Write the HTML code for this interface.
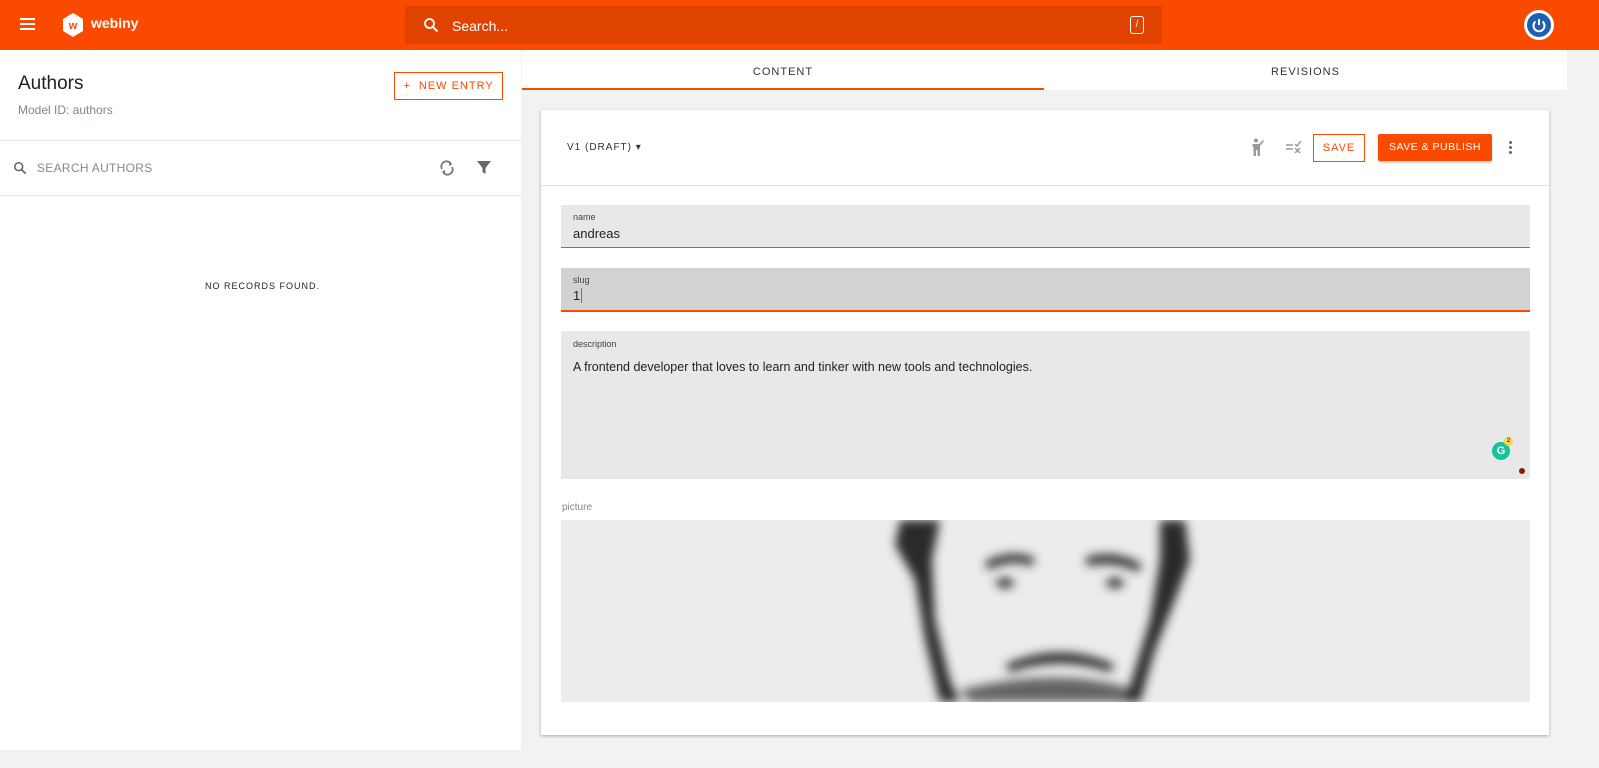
<!DOCTYPE html>
<html><head><style>
*{box-sizing:border-box;margin:0;padding:0}
body{width:1599px;height:768px;overflow:hidden;font-family:"Liberation Sans",sans-serif;background:#f2f2f2;position:relative}
.top{position:absolute;left:0;top:0;width:1599px;height:50px;background:#fa4a00}
.abs{position:absolute;white-space:nowrap}
.btxt{letter-spacing:1px;font-size:11px}
</style></head><body>
<div class="top">
  <div class="abs" style="left:20px;top:18px;width:15px;height:2px;background:#fff;box-shadow:0 5px 0 #fff,0 10px 0 #fff"></div>
  <svg class="abs" style="left:62px;top:13px" width="22" height="24" viewBox="0 0 22 24"><polygon points="11,0 21,6 21,18 11,24 1,18 1,6" fill="#fff"/><text x="11" y="16" text-anchor="middle" font-size="11" font-weight="bold" fill="#fa4a00" font-family="Liberation Sans">w</text></svg>
  <div class="abs" style="left:91px;top:15px;color:#fff;font-size:14px;font-weight:bold">webiny</div>
  <div class="abs" style="left:405px;top:6px;width:757px;height:38px;background:#e04300;border-radius:2px"></div>
  <svg class="abs" style="left:423px;top:17px" width="16" height="16" viewBox="0 0 16 16"><circle cx="6.5" cy="6.5" r="4.5" stroke="#fff" stroke-width="1.8" fill="none"/><line x1="10" y1="10" x2="14.5" y2="14.5" stroke="#fff" stroke-width="2"/></svg>
  <div class="abs" style="left:452px;top:18px;color:#fff;font-size:14px">Search...</div>
  <div class="abs" style="left:1130px;top:16px;width:14px;height:18px;border:1px solid #fff;border-radius:3px;color:#fff;font-size:10px;text-align:center;line-height:16px">/</div>
  <div class="abs" style="left:1524px;top:10px;width:30px;height:30px;border-radius:50%;background:#fff"></div>
  <div class="abs" style="left:1527px;top:13px;width:24px;height:24px;border-radius:50%;background:#1e5fb4"></div>
  <svg class="abs" style="left:1531px;top:17px" width="16" height="16" viewBox="0 0 16 16"><path d="M4.5 4.5 A5.5 5.5 0 1 0 11.5 4.5" stroke="#fff" stroke-width="2" fill="none"/><line x1="8" y1="2" x2="8" y2="8" stroke="#fff" stroke-width="2"/></svg>
</div>
<div class="abs" style="left:0;top:50px;width:521px;height:700px;background:#fff"></div>
<div class="abs" style="left:18px;top:73px;font-size:19px;color:#222">Authors</div>
<div class="abs" style="left:18px;top:103px;font-size:12px;color:#7a8794">Model ID: authors</div>
<div class="abs btxt" style="left:394px;top:72px;width:109px;height:28px;border:1px solid #fa4a00;color:#fa4a00;text-align:center;line-height:26px">+&nbsp; NEW ENTRY</div>
<div class="abs" style="left:0;top:140px;width:521px;height:1px;background:#e2e2e2"></div>
<svg class="abs" style="left:13px;top:161px" width="14" height="14" viewBox="0 0 16 16"><circle cx="6.5" cy="6.5" r="4.5" stroke="#666" stroke-width="1.8" fill="none"/><line x1="10" y1="10" x2="14.5" y2="14.5" stroke="#666" stroke-width="2"/></svg>
<div class="abs" style="left:37px;top:161px;font-size:12px;color:#888;letter-spacing:.3px">SEARCH AUTHORS</div>
<svg class="abs" style="left:439px;top:160px" width="16" height="16" viewBox="0 0 16 16"><path d="M3 9 A5 5 0 0 1 12 4 M13 7 A5 5 0 0 1 4 12" stroke="#777" stroke-width="1.8" fill="none"/><path d="M10 2 L13 4.5 L10 6Z M6 10 L3 11.5 L6 14Z" fill="#777"/></svg>
<svg class="abs" style="left:477px;top:161px" width="14" height="14" viewBox="0 0 14 14"><path d="M0 0 H14 L8.5 7 V13 L5.5 11 V7Z" fill="#666"/></svg>
<div class="abs" style="left:0;top:195px;width:521px;height:1px;background:#e2e2e2"></div>
<div class="abs" style="left:205px;top:281px;font-size:9px;letter-spacing:1px;color:#222">NO RECORDS FOUND.</div>
<div class="abs" style="left:522px;top:50px;width:1077px;height:40px;background:#fff"></div>
<div class="abs btxt" style="left:522px;top:66px;width:522px;text-align:center;color:#333">CONTENT</div>
<div class="abs btxt" style="left:1044px;top:66px;width:523px;text-align:center;color:#333">REVISIONS</div>
<div class="abs" style="left:522px;top:88px;width:522px;height:2px;background:#fa4a00"></div>
<div class="abs" style="left:1567px;top:50px;width:32px;height:718px;background:#f2f2f2"></div>
<div class="abs" style="left:541px;top:110px;width:1008px;height:625px;background:#fff;box-shadow:0 1px 3px rgba(0,0,0,.3)"></div>
<div class="abs btxt" style="left:567px;top:142px;color:#333;font-size:10px">V1 (DRAFT) ▾</div>
<svg class="abs" style="left:1249px;top:138px" width="16" height="18" viewBox="0 0 16 18"><circle cx="7" cy="2.5" r="2" fill="#999"/><path d="M4 6 H10 L14 2 L15 3 L11 8 V18 H8.5 V12 H7 V18 H4.5 V9 L3 8Z" fill="#999"/></svg>
<svg class="abs" style="left:1285px;top:141px" width="18" height="12" viewBox="0 0 18 12"><path d="M1 4H8M1 8H8M10 7L15 12M15 7L10 12M10 3L12 5L16 0" stroke="#999" stroke-width="1.5" fill="none"/></svg>
<div class="abs btxt" style="left:1313px;top:134px;width:52px;height:28px;border:1px solid #fa4a00;color:#fa4a00;text-align:center;line-height:26px">SAVE</div>
<div class="abs btxt" style="left:1378px;top:134px;width:114px;height:27px;background:#fa4a00;color:#fff;text-align:center;line-height:27px;border-radius:2px;box-shadow:0 2px 2px rgba(0,0,0,.2);letter-spacing:.5px;font-size:10.5px">SAVE &amp; PUBLISH</div>
<div class="abs" style="left:1509px;top:141px;width:3px;height:3px;background:#666;border-radius:50%;box-shadow:0 5px 0 #666,0 10px 0 #666"></div>
<div class="abs" style="left:541px;top:185px;width:1008px;height:1px;background:#e2e2e2"></div>
<div class="abs" style="left:561px;top:205px;width:969px;height:43px;background:#e8e8e8;border-bottom:1px solid #777"></div>
<div class="abs" style="left:573px;top:212px;font-size:9px;color:#444">name</div>
<div class="abs" style="left:573px;top:226px;font-size:13px;color:#222">andreas</div>
<div class="abs" style="left:561px;top:268px;width:969px;height:44px;background:#d2d2d2;border-bottom:2px solid #fa4a00"></div>
<div class="abs" style="left:573px;top:275px;font-size:9px;color:#444">slug</div>
<div class="abs" style="left:573px;top:288px;font-size:13px;color:#222">1<span style="border-left:1px solid #fa4a00;margin-left:1px"></span></div>
<div class="abs" style="left:561px;top:331px;width:969px;height:148px;background:#e8e8e8"></div>
<div class="abs" style="left:573px;top:339px;font-size:9px;color:#444">description</div>
<div class="abs" style="left:573px;top:360px;font-size:12.5px;color:#222">A frontend developer that loves to learn and tinker with new tools and technologies.</div>
<div class="abs" style="left:1492px;top:442px;width:18px;height:18px;border-radius:50%;background:#15c39a;color:#fff;font-size:11px;font-weight:bold;text-align:center;line-height:18px">G</div>
<div class="abs" style="left:1504px;top:437px;width:9px;height:9px;border-radius:50%;background:#f7d548;font-size:6px;text-align:center;line-height:9px">2</div>
<div class="abs" style="left:1519px;top:468px;width:6px;height:6px;border-radius:50%;background:#8b1a00"></div>
<div class="abs" style="left:562px;top:502px;font-size:10px;color:#888">picture</div>
<svg class="abs" style="left:561px;top:520px" width="969" height="182" viewBox="561 520 969 182">
<defs><filter id="b" x="-20%" y="-20%" width="140%" height="140%"><feGaussianBlur stdDeviation="5"/></filter></defs>
<rect x="561" y="520" width="969" height="182" fill="#ececec"/>
<g filter="url(#b)" fill="#2a2a2a">
<path d="M900 520 H940 L932 560 L935 620 L950 680 L960 702 H940 L925 640 L915 580 L895 545Z"/>
<path d="M1160 520 H1185 L1190 560 L1175 600 L1155 650 L1140 702 H1125 L1150 620 L1160 560Z"/>
<path d="M985 562 Q1010 548 1035 558 L1032 566 Q1010 558 988 570Z"/>
<path d="M1085 558 Q1115 548 1142 565 L1138 572 Q1115 560 1088 566Z"/>
<ellipse cx="1005" cy="583" rx="9" ry="5"/>
<ellipse cx="1115" cy="583" rx="9" ry="5"/>
<path d="M1005 665 Q1060 640 1115 665 L1110 672 Q1060 655 1010 672Z"/>
<path d="M960 690 Q1060 665 1135 690 L1130 702 H970Z" opacity=".7"/>
</g>
</svg>
<div class="abs" style="left:0;top:750px;width:521px;height:18px;background:#f2f2f2"></div>
</body></html>
